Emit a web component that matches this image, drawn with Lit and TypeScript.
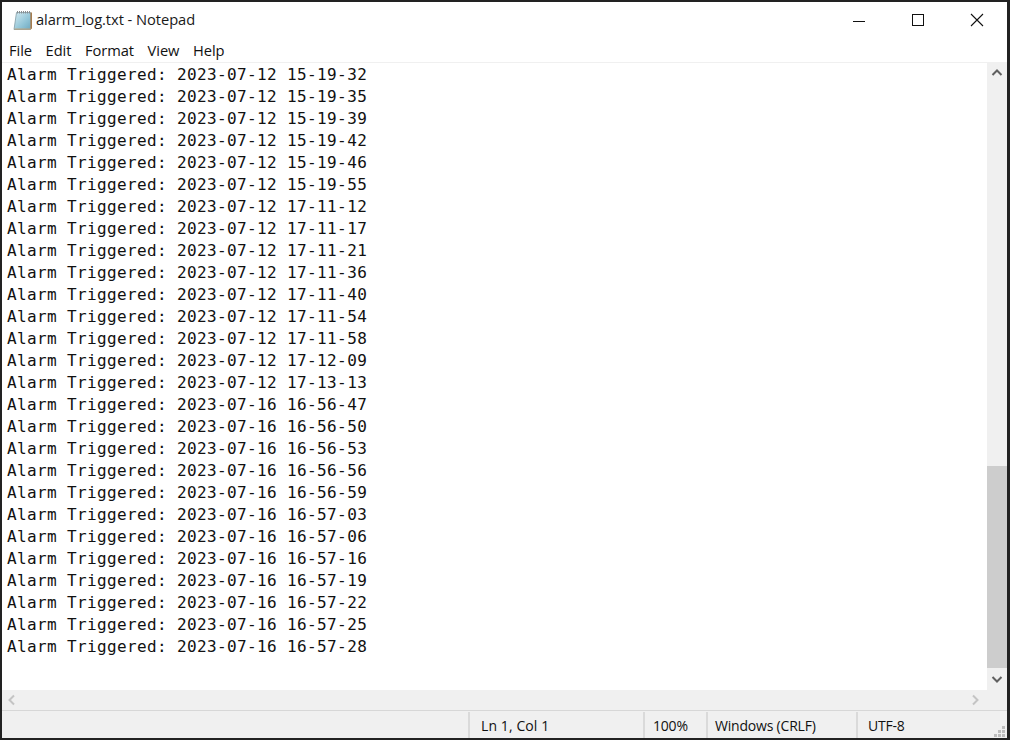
import { LitElement, html, css, svg } from "lit";
import { customElement } from "lit/decorators.js";

const times: [string, string][] = [
  ["12", "15-19-32"], ["12", "15-19-35"], ["12", "15-19-39"], ["12", "15-19-42"], ["12", "15-19-46"], ["12", "15-19-55"],
  ["12", "17-11-12"], ["12", "17-11-17"], ["12", "17-11-21"], ["12", "17-11-36"], ["12", "17-11-40"], ["12", "17-11-54"],
  ["12", "17-11-58"], ["12", "17-12-09"], ["12", "17-13-13"], ["16", "16-56-47"], ["16", "16-56-50"], ["16", "16-56-53"],
  ["16", "16-56-56"], ["16", "16-56-59"], ["16", "16-57-03"], ["16", "16-57-06"], ["16", "16-57-16"], ["16", "16-57-19"],
  ["16", "16-57-22"], ["16", "16-57-25"], ["16", "16-57-28"],
];

const chevron = (d: string, color: string) => html`<svg width="12" height="12" viewBox="0 0 12 12"><path d=${d} fill="none" stroke=${color} stroke-width="2"/></svg>`;

const notepadIcon = svg`
  <defs><linearGradient id="np" x1="0" y1="0" x2="1" y2="1">
    <stop offset="0" stop-color="#d6ebf2"/><stop offset="0.6" stop-color="#93c6d8"/><stop offset="1" stop-color="#6fa9c0"/>
  </linearGradient></defs>
  <path d="M4.5 3.5 H18.5 V20.5 H2 Z" fill="url(#np)" stroke="#7f9aa5" stroke-width="0.8"/>
  <path d="M18.5 3.5 H20 V19.5 L18.5 20.5 Z" fill="#a67c4e"/>
  <path d="M2.5 20.5 H19 V19.6 H2.5 Z" fill="#c9a06e"/>
  <path d="M5.5 2 V4.5 M7.5 2 V4.5 M9.5 2 V4.5 M11.5 2 V4.5 M13.5 2 V4.5 M15.5 2 V4.5 M17.5 2 V4.5" stroke="#8a8f92" stroke-width="1"/>
`;

@customElement("app-root")
export class AppRoot extends LitElement {
  static styles = css`
    :host {
      display: block;
      width: 1010px;
      height: 740px;
      box-sizing: border-box;
      padding: 2px 3px 2px 2px;
      background: #222222;
      font-family: "Open Sans", sans-serif;
      color: #000;
      overflow: hidden;
    }
    .window { height: 100%; display: flex; flex-direction: column; background: #fff; }
    .title { height: 34px; padding-bottom: 2px; flex: none; display: flex; align-items: center; padding-left: 10px; background: #fff; }
    .app-icon { width: 22px; height: 22px; flex: none; margin-top: 2px; }
    .title-text { margin-left: 2px; font-size: 14.7px; letter-spacing: -0.06px; color: #1a1a1a; white-space: nowrap; }
    .spacer { flex: 1; }
    .caption { width: 59px; height: 35px; margin-top: 2px; display: flex; align-items: center; justify-content: center; }
    .caption:last-child { margin-right: 1px; }
    .menu { height: 24px; flex: none; display: flex; align-items: center; padding-left: 7px; gap: 13.5px; font-size: 14.7px; letter-spacing: -0.05px; color: #111; }
    .rule { height: 1px; flex: none; background: #f0f0f0; }
    .mid { flex: 1; min-height: 0; display: flex; }
    .text { flex: 1; padding: 1px 0 0 5px; font-family: "DejaVu Sans Mono", monospace; font-size: 16px; letter-spacing: 0.37px; line-height: 22px; color: #111; white-space: pre; overflow: hidden; }
    .vbar { width: 20px; flex: none; display: flex; flex-direction: column; background: #f0f0f0; }
    .btn { height: 20px; flex: none; display: flex; align-items: center; justify-content: center; }
    .btn.down { height: 22px; }
    .track { flex: 1; display: flex; flex-direction: column; justify-content: flex-end; }
    .thumb { height: 202px; background: #cdcdcd; }
    .hbar { height: 20px; flex: none; display: flex; justify-content: space-between; background: #f0f0f0; padding-right: 22px; }
    .hbtn { width: 20px; height: 20px; display: flex; align-items: center; justify-content: center; }
    .status { height: 28px; flex: none; display: flex; background: #f0f0f0; border-top: 1px solid #d7d7d7; font-size: 14px; color: #111; box-sizing: border-box; position: relative; }
    .cell { flex: none; display: flex; align-items: center; box-sizing: border-box; border-left: 2px solid #dadada; margin-top: 1px; padding-left: 11px; white-space: nowrap; letter-spacing: -0.2px; }
    .cell.first { letter-spacing: 0.1px; }
    .grip { position: absolute; right: 1px; bottom: 0; }
  `;

  render() {
    return html`<div class="window">
      <div class="title">
        <svg class="app-icon" viewBox="0 0 22 22">${notepadIcon}</svg>
        <span class="title-text">alarm_log.txt - Notepad</span>
        <span class="spacer"></span>
        <span class="caption"><svg width="14" height="14" viewBox="0 0 14 14"><path d="M1 8.5H13" stroke="#111"/></svg></span>
        <span class="caption"><svg width="14" height="14" viewBox="0 0 14 14"><rect x="1.5" y="1.5" width="11" height="11" fill="none" stroke="#111"/></svg></span>
        <span class="caption"><svg width="14" height="14" viewBox="0 0 14 14"><path d="M1 1L13 13M13 1L1 13" stroke="#111" stroke-width="1.1"/></svg></span>
      </div>
      <div class="menu"><span>File</span><span>Edit</span><span>Format</span><span>View</span><span>Help</span></div>
      <div class="rule"></div>
      <div class="mid">
        <div class="text">${times.map(([d, t]) => html`<div>Alarm Triggered: 2023-07-${d} ${t}</div>`)}</div>
        <div class="vbar">
          <div class="btn">${chevron("M1.5 8L6 3.5L10.5 8", "#606060")}</div>
          <div class="track"><div class="thumb"></div></div>
          <div class="btn down">${chevron("M1.5 4L6 8.5L10.5 4", "#606060")}</div>
        </div>
      </div>
      <div class="hbar">
        <div class="hbtn">${chevron("M8 1.5L3.5 6L8 10.5", "#c4c4c4")}</div>
        <div class="hbtn">${chevron("M4 1.5L8.5 6L4 10.5", "#c4c4c4")}</div>
      </div>
      <div class="status">
        <span class="spacer"></span>
        <div class="cell first" style="width:175px">Ln 1, Col 1</div>
        <div class="cell" style="width:63px;padding-left:8px">100%</div>
        <div class="cell" style="width:150px;padding-left:7px">Windows (CRLF)</div>
        <div class="cell" style="width:151px;padding-left:10px">UTF-8</div>
        <svg class="grip" width="14" height="14" viewBox="0 0 14 14" fill="#bdbdbd">
          <rect x="10" y="2" width="3" height="3"/><rect x="6" y="6" width="3" height="3"/><rect x="10" y="6" width="3" height="3"/>
          <rect x="2" y="10" width="3" height="3"/><rect x="6" y="10" width="3" height="3"/><rect x="10" y="10" width="3" height="3"/>
        </svg>
      </div>
    </div>`;
  }
}
